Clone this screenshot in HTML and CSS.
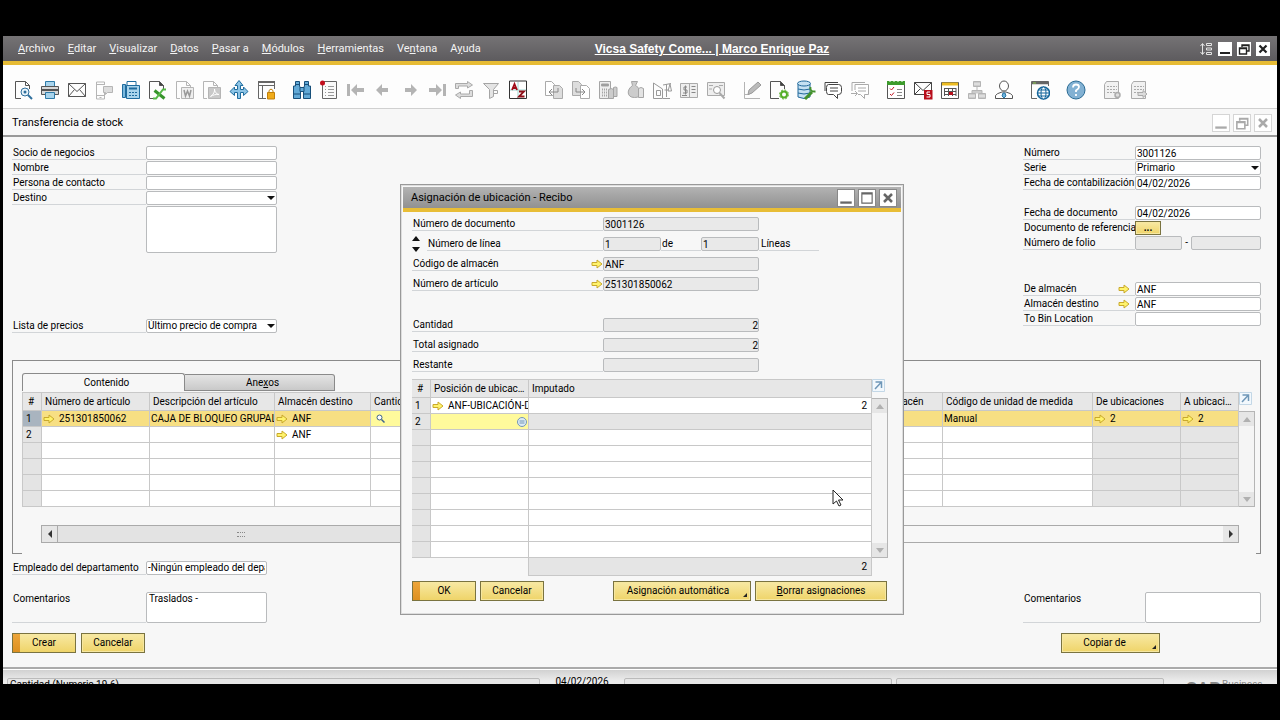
FILE: index.html
```html
<!DOCTYPE html>
<html lang="es">

<head>
    <meta charset="utf-8" />
    <title>Transferencia de stock</title>
    <link rel="stylesheet" href="styles.css">
</head>

<body>
    <svg class="sprite" aria-hidden="true">
        <symbol id="arrow" viewBox="0 0 12 10">
            <path d="M1 3.500h5V1l5 4-5 4V6.500H1z" fill="#fff36b" stroke="#c9a92c" stroke-linejoin="round" />
        </symbol>
        <symbol id="expand" viewBox="0 0 13 13">
            <path d="M.5.5h12v12H.5z" fill="#f2f8fd" stroke="#c3d7e6" />
            <path d="M3.500 3h6v6M9.500 3L3 10" fill="none" stroke="#6f97b8" stroke-width="1.500" />
        </symbol>
        <symbol id="min" viewBox="0 0 14 14">
            <path d="M2 11h10" stroke="currentColor" stroke-width="2" />
        </symbol>
        <symbol id="restore" viewBox="0 0 14 14">
            <path d="M5 5V3h7v6h-2M5 3.500h7M2.500 6h7v6h-7zM2.500 6.500h7" fill="none" stroke="currentColor" stroke-width="1.400" />
        </symbol>
        <symbol id="max" viewBox="0 0 14 14">
            <path d="M2.500 2.500h9v9h-9zM2.500 3.500h9" fill="none" stroke="currentColor" />
        </symbol>
        <symbol id="close" viewBox="0 0 14 14">
            <path d="M3.500 3.500l7 7M10.500 3.500l-7 7" stroke="currentColor" stroke-width="2.200" />
        </symbol>
    </svg>

    <div class="app">
        <header class="menubar">
            <nav class="menu">
                <a href="#"><u>A</u>rchivo</a>
                <a href="#"><u>E</u>ditar</a>
                <a href="#"><u>V</u>isualizar</a>
                <a href="#"><u>D</u>atos</a>
                <a href="#"><u>P</u>asar a</a>
                <a href="#"><u>M</u>ódulos</a>
                <a href="#"><u>H</u>erramientas</a>
                <a href="#">Ve<u>n</u>tana</a>
                <a href="#">A<u>y</u>uda</a>
            </nav>
            <a class="company" href="#">Vicsa Safety Come... | Marco Enrique Paz</a>
            <div class="win-buttons">
                <button class="plain" aria-label="Ajustar">
                    <svg width="14" height="14" viewBox="0 0 14 14" fill="none" stroke="#e4e4e4">
                        <path d="M3.500 2v10M1.500 4l2-2.500 2 2.500M1.500 10l2 2.500 2-2.500M7.500 1.500h5v2h-5zM7.500 6h5v2h-5zM7.500 10.500h5v2h-5z" />
                    </svg>
                </button>
                <button aria-label="Minimizar"><svg><use href="#min" /></svg></button>
                <button aria-label="Restaurar"><svg><use href="#restore" /></svg></button>
                <button aria-label="Cerrar"><svg><use href="#close" /></svg></button>
            </div>
        </header>

        <div class="toolbar">
            <div class="tool-group">
                <button aria-label="Vista previa"><svg viewBox="0 0 20 20" fill="none" stroke="#555">
                    <path d="M8 18.500H2.500v-17h10l4 4V9M12.500 1.500v4h4" />
                    <circle cx="12" cy="12" r="4" stroke="#2f6f9c" fill="#e8f3fa" /><circle cx="12" cy="12" r="1.500" fill="#2f6f9c" stroke="none" />
                    <path d="M15 15l4 4" stroke="#2f6f9c" stroke-width="2" /></svg></button>
                <button aria-label="Imprimir"><svg viewBox="0 0 20 20" stroke="#555">
                    <path d="M5.500 6.500v-5h9v5z" fill="#a9d4ec" stroke="#2f7ba8" />
                    <path d="M1.500 6.500h17v8h-17z" fill="#d8d8d8" /><path d="M2 10h16" stroke-width="2" />
                    <path d="M5.500 12.500h9v6h-9z" fill="#a9d4ec" stroke="#2f7ba8" /></svg></button>
                <button aria-label="Correo"><svg viewBox="0 0 20 20" fill="none" stroke="#555">
                    <path d="M1.500 3.500h17v13h-17zM1.500 3.500l8.500 8 8.500-8M1.500 16.500l6-7M18.500 16.500l-6-7" /></svg></button>
                <button aria-label="SMS"><svg viewBox="0 0 20 20" fill="none" stroke="#b5b5b5">
                    <path d="M10.500 12v7h-8v-17h8v3M2.500 4.500h8M2.500 15.500h8M5.500 17.500h2" />
                    <path d="M9.500 6.500h9v6h-5l-2 2v-2h-2z" fill="#ddd" /></svg></button>
                <button aria-label="Fax"><svg viewBox="0 0 20 20" stroke="#1f6c9e">
                    <path d="M6 6V1.500h9V6" fill="#fff" /><path d="M1.500 4.500h3v13h-3z" fill="#7ab8dd" />
                    <path d="M5.500 5.500h13v13h-13z" fill="#a9d4ec" /><path d="M8 8.500h8" stroke-width="2" />
                    <path d="M8 12.500h8M8 15.500h8" stroke-dasharray="2 1" /></svg></button>
                <button aria-label="Excel"><svg viewBox="0 0 20 20" fill="none" stroke="#555">
                    <path d="M5 18.500H1.500v-17h10l4 4V9" /><path d="M11.500 1.500v4h4z" fill="#444" />
                    <path d="M6.500 10.500l10 8" stroke="#36942b" stroke-width="3" /><path d="M18 9.500h-3l-7 9H5" stroke="#55b947" stroke-width="2" /></svg></button>
                <button aria-label="Word"><svg viewBox="0 0 20 20" fill="none" stroke="#b5b5b5">
                    <path d="M5 18.500H1.500v-17h10l4 4V7M11.500 1.500v4h4" /><path d="M6.500 7.500h12v11h-12z" fill="#eee" />
                    <path d="M9 10l1.500 6 2-5 2 5 1.500-6" stroke="#999" stroke-width="1.500" /></svg></button>
                <button aria-label="PDF"><svg viewBox="0 0 20 20" fill="none" stroke="#b5b5b5">
                    <path d="M5 18.500H1.500v-17h10l4 4V7M11.500 1.500v4h4" /><path d="M6.500 7.500h12v11h-12z" fill="#c9c9c9" />
                    <path d="M8.500 16.500c3-2 4.500-5 4-7.500 0 3 2 5 4.500 5.500-3-.5-6 .5-8.500 2z" stroke="#fff" /></svg></button>
                <button aria-label="Iniciar aplicación"><svg viewBox="0 0 20 20" fill="#8cc4e6" stroke="#1f6c9e">
                    <path d="M10 .500l4 5h-2.500v4h3V7l4.500 4.500-4.500 4v-3h-3v6h-3v-6h-3v3L1 11.500 5.500 7v2.500h3v-4H6z" /></svg></button>
                <button aria-label="Bloquear"><svg viewBox="0 0 20 20" fill="none" stroke="#666">
                    <path d="M10 18.500H2.500v-17h16V9M2.500 5.500h16M6.500 5.500v13" /><path d="M2 2h17" stroke-width="2" />
                    <path d="M11.500 12.500h7v6.500h-7z" fill="#f0ab19" stroke="#c17f09" /><path d="M13 12v-1.500q2-3 4 0V12" stroke="#c17f09" /></svg></button>
            </div>
            <div class="tool-group">
                <button aria-label="Buscar"><svg viewBox="0 0 20 20" fill="#62a9d6" stroke="#174f7a">
                    <path d="M3.500 1.500h4V6l1 2v10.500h-7V6h2zM12.500 1.500h4V6h2v12.500h-7V8l1-2z" /><path d="M8 7.500h4v4H8zM1.500 14h7M11.500 14h7M3.500 4.500h4M12.500 4.500h4" /></svg></button>
                <button aria-label="Crear"><svg viewBox="0 0 20 20" fill="none" stroke="#666">
                    <path d="M3.500 1.500h14v17h-14z" fill="#fafafa" /><path d="M6 6.500h1M9 6.500h6M6 9.500h1M9 9.500h6M6 12.500h1M9 12.500h6M6 15.500h1M9 15.500h6" stroke="#999" />
                    <circle cx="3.500" cy="3" r="2.500" fill="#c20d1c" stroke="none" /></svg></button>
                <button aria-label="Primer registro"><svg viewBox="0 0 20 20" fill="#b4b4b4">
                    <path d="M1 4h3v12H1zM5 10l6-6v4h7v4h-7v4z" /></svg></button>
                <button aria-label="Registro anterior"><svg viewBox="0 0 20 20" fill="#b4b4b4"><path d="M3 10l6-6v4h6v4H9v4z" /></svg></button>
                <button aria-label="Registro siguiente"><svg viewBox="0 0 20 20" fill="#b4b4b4"><path d="M17 10l-6-6v4H5v4h6v4z" /></svg></button>
                <button aria-label="Último registro"><svg viewBox="0 0 20 20" fill="#b4b4b4">
                    <path d="M19 4h-3v12h3zM15 10L9 4v4H2v4h7v4z" /></svg></button>
                <button aria-label="Actualizar"><svg viewBox="0 0 20 20" fill="#ddd" stroke="#aaa">
                    <path d="M1.500 8.500v-5h12v-2l5 3.500-5 3v-2h-9v2.500zM18.500 10.500v6h-12v2l-5-3.500 5-3v2h9v-3.500z" /></svg></button>
                <button aria-label="Filtrar"><svg viewBox="0 0 20 20" fill="#e4e4e4" stroke="#a5a5a5">
                    <path d="M2.500 3.500h15l-5 6v7l-4 2v-9z" /><path d="M12.500 10.500h4v3h-4" fill="none" /></svg></button>
                <button aria-label="Clasificar"><svg viewBox="0 0 20 20">
                    <path d="M1.500 1h17v17.500h-17z" fill="#fff" stroke="#333" /><path d="M10 2v16M2 10h16" stroke="#9fd6d0" />
                    <path d="M4 10l2.500-6L9 10M5 8h3" fill="none" stroke="#a00b17" stroke-width="1.800" /><path d="M11 11.500h5l-5 5h5.500" fill="none" stroke="#8e1019" stroke-width="1.800" /></svg></button>
            </div>
            <div class="tool-group">
                <button aria-label="Documento base"><svg viewBox="0 0 20 20" fill="#fff" stroke="#aaa">
                    <path d="M1.500 1.500h6l3 3v11h-9z" /><path d="M9.500 5.500h6l3 3v10h-9z" fill="#ddd" /><path d="M14 8v4H5M8 9l-3 3 3 3" fill="none" stroke="#888" /></svg></button>
                <button aria-label="Documento de destino"><svg viewBox="0 0 20 20" fill="#ddd" stroke="#aaa">
                    <path d="M1.500 1.500h6l3 3v11h-9z" /><path d="M9.500 5.500h6l3 3v10h-9z" fill="#fff" /><path d="M5 8v4h9M11 9l3 3-3 3" fill="none" stroke="#888" /></svg></button>
                <button aria-label="Ganancia bruta"><svg viewBox="0 0 20 20" fill="#eee" stroke="#a5a5a5">
                    <path d="M1.500 1.500h11v17h-11z" /><path d="M3.500 4h7v2h-7z" fill="#999" /><path d="M4 9.500h6M4 12.500h6M4 15.500h6" stroke-dasharray="1 1" stroke-width="2" />
                    <path d="M10.500 9.500q3-2 5 0v9h-5zM15.500 7.500q2-1 3.500 0v9h-3.500z" fill="#ccc" /></svg></button>
                <button aria-label="Medios de pago"><svg viewBox="0 0 20 20" fill="#ccc" stroke="#a5a5a5">
                    <path d="M6.500 1.500h6l-2 4c8 5 7 12-1 12s-8-8-2-12z" /><path d="M13.500 8.500q2.500-2 5 0v9h-5z" fill="#e3e3e3" /></svg></button>
                <button aria-label="Volumen y peso"><svg viewBox="0 0 20 20" fill="none" stroke="#999">
                    <path d="M1.500 3v15.500h9V9l-9-6M4.500 10.500h4v5h-4zM14.500 4v13M11 18.500h7M11 5l8-1.500M16 11l2-7 1.500 7zM12.500 10h4" /></svg></button>
                <button aria-label="Asiento"><svg viewBox="0 0 20 20" fill="#eee" stroke="#aaa">
                    <path d="M1.500 3.500h17v14h-17zM10.500 3.500v14" /><path d="M12.500 6.500h4M12.500 9.500h4M12.500 12.500h4M3 15.500h5M8 7H5v3h3v3H4M6.500 5.500v9" fill="none" stroke="#888" /></svg></button>
                <button aria-label="Detalles de asiento"><svg viewBox="0 0 20 20" fill="#eee" stroke="#aaa">
                    <path d="M1.500 2.500h17v13h-17z" /><path d="M3 5.500h4M13 5.500h4M3 9h3" /><circle cx="11" cy="10" r="3.500" fill="#fff" stroke="#999" /><path d="M13.500 13l5 5.500" stroke-width="2" /></svg></button>
            </div>
            <div class="tool-group">
                <button aria-label="Diseño"><svg viewBox="0 0 20 20" fill="none" stroke="#b4b4b4">
                    <path d="M2.500 2v16.500H18M2.500 14.500h5" /><path d="M6 14.500l1-4.500 9-8 3 3-9 8z" fill="#bbb" stroke="#999" /></svg></button>
                <button aria-label="Configuración"><svg viewBox="0 0 20 20" fill="none" stroke="#555">
                    <path d="M10 18.500H1.500v-17h10l4 4V9" /><path d="M11.500 1.500v4h4z" fill="#444" />
                    <circle cx="15" cy="14.500" r="3" stroke="#55ae28" stroke-width="2" /><circle cx="15" cy="14.500" r="4.500" stroke="#55ae28" stroke-dasharray="2 1.500" /></svg></button>
                <button aria-label="Consultas"><svg viewBox="0 0 20 20" fill="#c5e1f3" stroke="#21699b">
                    <path d="M2 4v13q6 3 12 0V4z" /><ellipse cx="8" cy="3.500" rx="6.500" ry="2.500" /><path d="M2 9q6 2 12 0M2 13q6 2 12 0" fill="none" />
                    <path d="M9 19l7-7" stroke="#43922c" stroke-width="3" /><path d="M14.500 7q-1 5 5 4.500" stroke="#43922c" stroke-width="2" fill="none" /></svg></button>
                <button aria-label="Mensajes"><svg viewBox="0 0 20 20" fill="#fff" stroke="#444">
                    <path d="M2 11V2.500h13" fill="none" /><path d="M5.500 4.500h10q3 0 3 3v4q0 3-3 3h-1v4l-4-4h-5q-2 0-2-3v-4q0-3 2-3z" /><path d="M7 8h8M7 11h8" /></svg></button>
                <button aria-label="Responder"><svg viewBox="0 0 20 20" fill="#fff" stroke="#aaa">
                    <path d="M2 11V2.500h13" fill="none" /><path d="M5 10V4.500h13.500v10h-4v4l-4-4H8" /><path d="M8 8h8M8 11h8M1 13.500h6M5 11l2.500 2.500L5 16" fill="none" /></svg></button>
            </div>
            <div class="tool-group">
                <button aria-label="Actividades"><svg viewBox="0 0 20 20" fill="#fff" stroke="#555">
                    <path d="M1.500 3.500h17v15h-17z" /><path d="M1 3h18" stroke="#3d9b2c" stroke-width="4" /><path d="M4 1v1M8 1v1M12 1v1M16 1v1" stroke="#fff" />
                    <path d="M4 8.500l1.500 1.500L8 7M4 14l1.500 1.500L8 12.500" fill="none" stroke="#c21825" /><path d="M11 9.500h5M11 12.500h5M11 15.500h5" stroke="#888" /></svg></button>
                <button aria-label="Alertas"><svg viewBox="0 0 20 20" fill="#fff" stroke="#444">
                    <path d="M1.500 2.500h17v12h-17zM1.500 2.500l8.500 8 8.500-8M1.500 14.500l6-6" /><path d="M11 10h8.500v9.500H11z" fill="#b80f1c" stroke="none" />
                    <path d="M17 12h-3v2.500h3V17h-3.500" fill="none" stroke="#fff" /></svg></button>
                <button aria-label="Calendario"><svg viewBox="0 0 20 20" fill="#fff" stroke="#555">
                    <path d="M1.500 2.500h17v16h-17z" /><path d="M2 4h16" stroke="#edbc21" stroke-width="3" /><path d="M4 8.500h12M4 11.500h12M4 14.500h12M4.500 8v8M8.500 8v8M12.500 8v8M16 8v8" /><path d="M9 12h4v3H9z" fill="#b80f1c" stroke="none" /></svg></button>
                <button aria-label="Organigrama"><svg viewBox="0 0 20 20" fill="#ccc" stroke="#b5b5b5">
                    <path d="M6.500 1.500h7v5h-7zM1.500 13.500h7v5h-7zM11.500 13.500h7v5h-7zM10 6.500v4M5 13.500v-3h10v3" /><path d="M2 16h6M12 16h6M7 4h6" stroke="#eee" /></svg></button>
                <button aria-label="Usuario"><svg viewBox="0 0 20 20" fill="#fff" stroke="#555">
                    <path d="M1.500 18.500v-3q1-2 6.500-3.500h4q5.500 1.500 6.500 3.500v3z" /><ellipse cx="10" cy="6" rx="4.500" ry="5" /><path d="M9 13h2l1 3-2 2-2-2z" fill="#6db3dc" stroke="#2b77a6" /></svg></button>
            </div>
            <div class="tool-group">
                <button aria-label="Web"><svg viewBox="0 0 20 20" fill="#fff" stroke="#666">
                    <path d="M7 18.500H1.500v-17h17V6" fill="none" /><path d="M1.500 3h17" stroke-width="2.500" /><path d="M3 3h3" stroke="#8dcc4f" />
                    <circle cx="13.500" cy="13" r="6" stroke="#13659b" stroke-width="1.500" /><ellipse cx="13.500" cy="13" rx="2.500" ry="6" stroke="#13659b" /><path d="M8 13h11M8.500 10h10M8.500 16h10" stroke="#13659b" /></svg></button>
            </div>
            <div class="tool-group">
                <button aria-label="Ayuda"><svg viewBox="0 0 20 20"><circle cx="10" cy="10" r="9" fill="#82b1d3" stroke="#2a6b94" />
                    <path d="M7 7.500q0-3 3-3t3 2.500q0 1.500-3 3.500v1.500M10 14v2" fill="none" stroke="#fff" stroke-width="1.800" /></svg></button>
            </div>
            <div class="tool-group">
                <button aria-label="Panel"><svg viewBox="0 0 20 20" fill="#f1f1f1" stroke="#aaa">
                    <path d="M4.500 1.500h12v17h-14v-14z" /><path d="M5 6.500h10M5 9.500h10M5 12.500h8" stroke-dasharray="2 1" /><circle cx="15.500" cy="15" r="2.500" stroke-width="1.500" fill="#ddd" /></svg></button>
                <button aria-label="Exportar panel"><svg viewBox="0 0 20 20" fill="#f1f1f1" stroke="#aaa">
                    <path d="M4.500 1.500h12v17h-14v-14z" /><path d="M5 6.500h10M5 9.500h10M5 12.500h5" stroke-dasharray="2 1" /><path d="M9 12.500h5v-2l4 3.500-4 3.500v-2H9z" fill="#ddd" /></svg></button>
            </div>
        </div>

        <div class="doc-title">
            <h1>Transferencia de stock</h1>
            <div class="win-buttons faded">
                <button aria-label="Minimizar"><svg><use href="#min" /></svg></button>
                <button aria-label="Restaurar"><svg><use href="#restore" /></svg></button>
                <button aria-label="Cerrar"><svg><use href="#close" /></svg></button>
            </div>
        </div>

        <main class="document">
            <div class="columns">
                <div class="left-form">
                    <div class="row"><label for="socio">Socio de negocios</label><input id="socio" type="text"></div>
                    <div class="row"><label for="nombre">Nombre</label><input id="nombre" type="text"></div>
                    <div class="row"><label for="persona">Persona de contacto</label><input id="persona" type="text"></div>
                    <div class="row"><label for="destino">Destino</label><span class="select"><select id="destino"><option></option></select></span></div>
                    <div class="row area"><span class="no-label"></span><textarea aria-label="Dirección"></textarea></div>
                    <div class="row prices"><label for="lista">Lista de precios</label><span class="select"><select id="lista"><option>Último precio de compra</option></select></span></div>
                </div>
                <div class="right-form">
                    <div class="row"><label for="numero">Número</label><input id="numero" type="text" value="3001126"></div>
                    <div class="row"><label for="serie">Serie</label><span class="select"><select id="serie"><option>Primario</option></select></span></div>
                    <div class="row"><label for="fcont">Fecha de contabilización</label><input id="fcont" type="text" value="04/02/2026"></div>
                    <div class="row spaced"><label for="fdoc">Fecha de documento</label><input id="fdoc" type="text" value="04/02/2026"></div>
                    <div class="row"><label class="no-line" for="docref">Documento de referencia</label><button class="gold dots" id="docref">...</button></div>
                    <div class="row"><label for="folio">Número de folio</label><span class="folio"><input id="folio" type="text" disabled>-<input aria-label="Folio" type="text" disabled></span></div>
                    <div class="row bins"><label for="dealm">De almacén<svg class="arrow"><use href="#arrow" /></svg></label><input id="dealm" type="text" value="ANF"></div>
                    <div class="row"><label for="almdest">Almacén destino<svg class="arrow"><use href="#arrow" /></svg></label><input id="almdest" type="text" value="ANF"></div>
                    <div class="row"><label for="tobin">To Bin Location</label><input id="tobin" type="text"></div>
                </div>
            </div>

            <section class="panel">
                <div class="tabs">
                    <button class="tab active">Contenido</button>
                    <button class="tab">Ane<u>x</u>os</button>
                </div>
                <div class="grid-wrap">
                    <table class="grid items">
                        <colgroup>
                            <col class="c-num"><col class="c-art"><col class="c-desc"><col class="c-dest"><col><col class="c-alm"><col class="c-um"><col class="c-de"><col class="c-a">
                        </colgroup>
                        <thead>
                            <tr>
                                <th>#</th>
                                <th>Número de artículo</th>
                                <th>Descripción del artículo</th>
                                <th>Almacén destino</th>
                                <th>Cantidad</th>
                                <th>Código de almacén</th>
                                <th>Código de unidad de medida</th>
                                <th>De ubicaciones</th>
                                <th>A ubicaciones</th>
                            </tr>
                        </thead>
                        <tbody>
                            <tr class="selected">
                                <td>1</td>
                                <td><svg class="arrow"><use href="#arrow" /></svg>251301850062</td>
                                <td>CAJA DE BLOQUEO GRUPAL</td>
                                <td><svg class="arrow"><use href="#arrow" /></svg>ANF</td>
                                <td class="editing"><svg class="lens" viewBox="0 0 9 9" fill="#fff" stroke="#3f648c"><circle cx="3.500" cy="3.500" r="2.500" /><path d="M5.500 5.500l3 3" stroke-width="1.500" /></svg></td>
                                <td></td>
                                <td>Manual</td>
                                <td><svg class="arrow"><use href="#arrow" /></svg>2</td>
                                <td><svg class="arrow"><use href="#arrow" /></svg>2</td>
                            </tr>
                            <tr>
                                <td>2</td><td></td><td></td>
                                <td><svg class="arrow"><use href="#arrow" /></svg>ANF</td>
                                <td></td><td></td><td></td><td></td><td></td>
                            </tr>
                            <tr><td></td><td></td><td></td><td></td><td></td><td></td><td></td><td></td><td></td></tr>
                            <tr><td></td><td></td><td></td><td></td><td></td><td></td><td></td><td></td><td></td></tr>
                            <tr><td></td><td></td><td></td><td></td><td></td><td></td><td></td><td></td><td></td></tr>
                            <tr><td></td><td></td><td></td><td></td><td></td><td></td><td></td><td></td><td></td></tr>
                        </tbody>
                    </table>
                    <div class="grid-side">
                        <svg class="expand"><use href="#expand" /></svg>
                        <div class="vscroll"><i class="up"></i><i class="down"></i></div>
                    </div>
                </div>
                <div class="hscroll">
                    <i class="left"></i>
                    <div class="thumb"><span></span></div>
                    <i class="right"></i>
                </div>
            </section>

            <div class="columns bottom">
                <div class="left-form narrow">
                    <div class="row"><label for="empleado">Empleado del departamento</label><select id="empleado"><option>-Ningún empleado del departamento</option></select></div>
                    <div class="row comment"><label for="coment">Comentarios</label><textarea id="coment">Traslados -</textarea></div>
                </div>
                <div class="right-form narrow">
                    <div class="row comment"><label for="coment2">Comentarios</label><textarea id="coment2"></textarea></div>
                </div>
            </div>
            <div class="actions">
                <button class="gold main">Crear</button>
                <button class="gold">Cancelar</button>
                <button class="gold menu-btn copy">Copiar de</button>
            </div>
        </main>

        <footer class="status">
            <div class="cell hint">Cantidad (Numeric 19.6)</div>
            <div class="date">04/02/2026</div>
            <div class="cell"></div>
            <div class="cell"></div>
            <div class="brand"><b>SAP</b><span>Business</span></div>
        </footer>

        <div class="dialog" role="dialog" aria-labelledby="dialog-title">
            <div class="dialog-title">
                <h2 id="dialog-title">Asignación de ubicación - Recibo</h2>
                <div class="win-buttons light">
                    <button aria-label="Minimizar"><svg><use href="#min" /></svg></button>
                    <button aria-label="Maximizar"><svg><use href="#max" /></svg></button>
                    <button aria-label="Cerrar"><svg><use href="#close" /></svg></button>
                </div>
            </div>
            <div class="dialog-body">
                <div class="drow"><label for="d-doc">Número de documento</label><input id="d-doc" type="text" value="3001126" readonly></div>
                <div class="drow">
                    <span class="spin"><i class="up"></i><i class="down"></i></span>
                    <label for="d-lin">Número de línea</label>
                    <input class="short" id="d-lin" type="text" value="1" readonly>
                    <label class="of" for="d-tot">de</label>
                    <input class="short" id="d-tot" type="text" value="1" readonly>
                    <span class="lines">Líneas</span>
                </div>
                <div class="drow"><label for="d-alm">Código de almacén<svg class="arrow"><use href="#arrow" /></svg></label><input id="d-alm" type="text" value="ANF" readonly></div>
                <div class="drow"><label for="d-art">Número de artículo<svg class="arrow"><use href="#arrow" /></svg></label><input id="d-art" type="text" value="251301850062" readonly></div>
                <div class="drow totals"><label for="d-can">Cantidad</label><input class="num" id="d-can" type="text" value="2" readonly></div>
                <div class="drow"><label for="d-tas">Total asignado</label><input class="num" id="d-tas" type="text" value="2" readonly></div>
                <div class="drow"><label for="d-res">Restante</label><input class="num" id="d-res" type="text" readonly></div>

                <div class="grid-wrap">
                    <table class="grid bins-grid">
                        <colgroup><col class="c-num"><col class="c-pos"><col></colgroup>
                        <thead>
                            <tr><th>#</th><th>Posición de ubicación</th><th>Imputado</th></tr>
                        </thead>
                        <tbody>
                            <tr><td>1</td><td><svg class="arrow"><use href="#arrow" /></svg>ANF-UBICACIÓN-DE</td><td class="num">2</td></tr>
                            <tr class="new">
                                <td>2</td>
                                <td class="editing"><svg class="pick" viewBox="0 0 10 10" fill="#dcebf5" stroke="#7396b5"><circle cx="5" cy="5" r="4.500" /><path d="M2.500 4h5M2.500 6h5" /></svg></td>
                                <td></td>
                            </tr>
                            <tr><td></td><td></td><td></td></tr>
                            <tr><td></td><td></td><td></td></tr>
                            <tr><td></td><td></td><td></td></tr>
                            <tr><td></td><td></td><td></td></tr>
                            <tr><td></td><td></td><td></td></tr>
                            <tr><td></td><td></td><td></td></tr>
                            <tr><td></td><td></td><td></td></tr>
                            <tr><td></td><td></td><td></td></tr>
                        </tbody>
                        <tfoot>
                            <tr><td colspan="2"></td><td class="num">2</td></tr>
                        </tfoot>
                    </table>
                    <div class="grid-side">
                        <svg class="expand"><use href="#expand" /></svg>
                        <div class="vscroll"><i class="up"></i><i class="down"></i></div>
                    </div>
                </div>
                <div class="actions">
                    <button class="gold main">OK</button>
                    <button class="gold">Cancelar</button>
                    <button class="gold menu-btn auto">Asignación automática</button>
                    <button class="gold wide"><u>B</u>orrar asignaciones</button>
                </div>
            </div>
        </div>

        <svg class="pointer" viewBox="0 0 12 18" fill="#fff" stroke="#222">
            <path d="M1 1v14l3.500-3 2.500 5 2-1-2.500-5H11z" />
        </svg>
    </div>
</body>

</html>
```

FILE: styles.css
```css
* {
    box-sizing: border-box;
}

body {
    margin: 0;
    padding: 36px 3px;
    height: 100vh;
    background: #000;
    color: #000;
    font: 10px/14px Roboto, sans-serif;
}

input,
select,
textarea,
button {
    font: inherit;
    color: inherit;
    margin: 0;
}

button {
    padding: 0;
}

.sprite {
    position: absolute;
    width: 0;
    height: 0;
}

.app {
    position: relative;
    height: 100%;
    overflow: hidden;
    background: #f7f7f7;
}

/* menu bar */
.menubar {
    display: flex;
    align-items: center;
    height: 29px;
    padding: 1px 7px 0 15px;
    background: linear-gradient(#757375, #5d5b5e);
    border-bottom: 4px solid #e6bb34;
}

.menu {
    display: flex;
    gap: 13px;
}

.menu a {
    color: #f4f4f4;
    font-size: 11px;
    text-decoration: none;
    white-space: nowrap;
}

.company {
    margin: 0 auto 0 114px;
    color: #fff;
    font: bold 12px/16px "Liberation Sans", Arial, sans-serif;
    white-space: nowrap;
}

.win-buttons {
    display: flex;
    gap: 5px;
}

.win-buttons button {
    width: 14px;
    height: 14px;
    border: 0;
    background: #fff;
    color: #222;
}

.win-buttons svg {
    display: block;
    width: 14px;
    height: 14px;
}

.win-buttons .plain {
    background: none;
}

/* toolbar */
.toolbar {
    display: flex;
    gap: 16px;
    height: 44px;
    padding: 15px 10px 0;
    background: #fdfdfd;
    border-bottom: 1px solid #d0d0d0;
}

.tool-group {
    display: flex;
    gap: 7px;
}

.tool-group button {
    width: 20px;
    height: 20px;
    border: 0;
    background: none;
}

.tool-group svg {
    display: block;
    width: 20px;
    height: 20px;
}

.doc-title {
    display: flex;
    align-items: center;
    justify-content: space-between;
    height: 28px;
    padding: 2px 5px 0 9px;
    border-bottom: 2px solid #999;
}

.doc-title h1,
.dialog-title h2 {
    margin: 0;
    font-size: 11px;
    line-height: 16px;
    font-weight: 400;
}

.faded,
.light {
    gap: 3px;
}

.faded button,
.light button {
    width: 18px;
    height: 18px;
    border: 1px solid #d5d5d5;
    color: #aaa;
}

.faded svg,
.light svg {
    width: 16px;
    height: 16px;
}

/* document form */
.document {
    padding: 9px 16px 14px 9px;
}

.columns {
    display: flex;
    justify-content: space-between;
}

.left-form {
    width: 265px;
}

.right-form {
    width: 238px;
}

.row {
    display: flex;
    height: 15px;
}

.row label,
.no-label {
    flex: none;
    display: flex;
    align-items: center;
    justify-content: space-between;
    width: 134px;
    height: 14px;
    padding-left: 1px;
    overflow: hidden;
    white-space: nowrap;
    border-bottom: 1px solid #d2d5d8;
}

.row .no-line,
.no-label {
    border-color: transparent;
}

.right-form label {
    width: 112px;
}

input,
select,
textarea {
    flex: 1;
    min-width: 0;
    width: 100%;
    height: 14px;
    padding: 0 1px;
    border: 1px solid #b9bbbd;
    border-radius: 2px;
    background: #fff;
    line-height: 12px;
    outline: 0;
}

textarea {
    resize: none;
    padding: 0 2px;
}

select {
    appearance: none;
}

input:disabled,
input:read-only {
    background: #e9e9e9;
}

.select {
    position: relative;
    display: flex;
    flex: 1;
    min-width: 0;
}

.select::after {
    content: "";
    position: absolute;
    right: 2px;
    top: 5px;
    border: 4px solid transparent;
    border-top-color: #111;
    border-bottom: 0;
    pointer-events: none;
}

.area {
    height: 113px;
}

.area textarea {
    height: 47px;
}

.spaced {
    margin-top: 15px;
}

.bins {
    margin-top: 31px;
}

.dots {
    width: 26px;
    height: 14px;
    line-height: 8px;
    font-weight: 700;
}

.folio {
    display: flex;
    flex: 1;
    gap: 3px;
}

.folio input + input {
    flex: none;
    width: 70px;
}

.arrow {
    flex: none;
    width: 12px;
    height: 10px;
    vertical-align: -2px;
}

.row .arrow {
    margin-right: 5px;
}

/* buttons */
.gold {
    position: relative;
    border: 1px solid #7a7340;
    background: linear-gradient(#f8e9a4, #efd469);
    box-shadow: inset 0 0 0 1px #f6e7a0;
    white-space: nowrap;
}

.actions {
    display: flex;
    gap: 5px;
}

.actions .gold {
    width: 64px;
    height: 20px;
}

.actions .main {
    background:
        linear-gradient(#eda53a, #dd9020) 0 0 / 7px 100% no-repeat,
        linear-gradient(#f8e9a4, #efd469);
    box-shadow: none;
}

.menu-btn::after {
    content: "";
    position: absolute;
    right: 3px;
    bottom: 3px;
    border: 2px solid #222;
    border-top-color: transparent;
    border-left-color: transparent;
}

.actions .copy {
    width: 99px;
    margin: 0 101px 0 auto;
    padding-right: 12px;
}

/* tab panel */
.panel {
    margin-top: 26px;
    height: 194px;
    padding: 12px 5px 0 9px;
    border: 1px solid #8a8a8a;
    border-bottom: 0;
    background:
        linear-gradient(#8a8a8a, #8a8a8a) 0 100% / 9px 1px no-repeat,
        linear-gradient(#8a8a8a, #8a8a8a) 100% 100% / 4px 1px no-repeat;
}

.tabs {
    display: flex;
    align-items: flex-end;
    height: 18px;
    margin-bottom: 1px;
}

.tab {
    width: 150px;
    height: 17px;
    padding-left: 6px;
    border: 1px solid #8a8a8a;
    border-left: 0;
    border-radius: 0 3px 0 0;
    background: linear-gradient(#e4e4e4, #c9c9c9);
}

.tab.active {
    width: 163px;
    height: 18px;
    border-left: 1px solid #8a8a8a;
    border-bottom: 0;
    border-radius: 3px 3px 0 0;
    background: #f7f7f7;
}

.grid-wrap {
    display: flex;
}

.grid {
    flex: 1;
    width: 100%;
    min-width: 0;
    table-layout: fixed;
    border-spacing: 0;
    border-left: 1px solid #c8c8c8;
}

.grid th,
.grid td {
    height: 16px;
    padding: 0 1px;
    overflow: hidden;
    white-space: nowrap;
    line-height: 14px;
    text-align: left;
    border-right: 1px solid #c8c8c8;
    border-bottom: 1px solid #c8c8c8;
    background: #fff;
}

.grid th {
    height: 19px;
    padding: 0 3px;
    border-top: 1px solid #c8c8c8;
    background: #e7e7e7;
    font-weight: 400;
    text-overflow: ellipsis;
}

.grid th:first-child {
    padding: 0 5px;
}

.grid tbody td:first-child {
    padding: 0 3px;
    background: #e4e4e4;
}

.grid .num {
    text-align: right;
    padding-right: 4px;
}

.c-num {
    width: 19px;
}

.c-art {
    width: 108px;
}

.c-desc {
    width: 125px;
}

.c-dest {
    width: 96px;
}

.c-alm {
    width: 108px;
}

.c-um {
    width: 150px;
}

.c-de {
    width: 88px;
}

.c-a {
    width: 58px;
}

.c-pos {
    width: 98px;
}

td .arrow {
    margin-right: 4px;
}

.items tbody td:nth-child(n+8),
.grid .new td {
    background: #e5e5e5;
}

.items .selected td,
.items .selected td:nth-child(n+8) {
    background: #f7df83;
}

.items .selected td:first-child {
    background: #a9b4bf;
}

.items .selected .editing,
.grid .new .editing {
    background: #fffa9c;
}

.lens {
    display: block;
    width: 9px;
    height: 9px;
    margin-left: 4px;
}

.pick {
    display: block;
    width: 10px;
    height: 10px;
    margin-left: auto;
}

.grid-side {
    display: flex;
    flex-direction: column;
    width: 16px;
}

.expand {
    width: 13px;
    height: 13px;
    margin-bottom: 6px;
}

.vscroll {
    display: flex;
    flex: 1;
    flex-direction: column;
    justify-content: space-between;
    border: 1px solid #b5b5b5;
    border-left: 0;
    background: #f5f5f5;
}

.vscroll i {
    display: flex;
    align-items: center;
    justify-content: center;
    height: 14px;
    background: #e6e6e6;
}

.up::after,
.down::after,
.left::after,
.right::after {
    content: "";
    border: 4px solid transparent;
}

.up::after {
    border-top: 0;
    border-bottom: 5px solid #b0b0b0;
}

.down::after {
    border-bottom: 0;
    border-top: 5px solid #b0b0b0;
}

.left::after {
    border-left: 0;
    border-right-color: #333;
}

.right::after {
    border-right: 0;
    border-left-color: #333;
}

.hscroll {
    display: flex;
    height: 18px;
    margin: 18px 16px 0 19px;
    border: 1px solid #aaa;
    background: #f7f7f7;
}

.hscroll i {
    display: flex;
    align-items: center;
    justify-content: center;
    width: 15px;
    background: #e6e6e6;
}

.thumb {
    display: flex;
    align-items: center;
    justify-content: center;
    width: 368px;
    margin-right: auto;
    border-left: 1px solid #aaa;
    border-right: 1px solid #aaa;
    background: #e3e3e3;
}

.thumb span {
    width: 8px;
    height: 5px;
    border-top: 1px dotted #888;
    border-bottom: 1px dotted #888;
}

/* bottom of the document */
.bottom {
    margin: 7px 0 10px;
}

.narrow {
    align-self: flex-end;
}

.left-form.narrow {
    width: 255px;
}

.narrow .comment {
    height: 31px;
}

.left-form .comment {
    margin-top: 16px;
}

.comment label {
    align-items: flex-start;
    height: 31px;
}

.comment textarea {
    height: 31px;
}

.right-form.narrow label {
    width: 122px;
}

/* status bar */
.status {
    display: flex;
    height: 34px;
    padding: 9px 14px 0 4px;
    border-top: 2px solid #aaa;
    box-shadow: inset 0 1px 0 #fff;
    background: linear-gradient(#cfcfcf, #ececec 12px);
}

.cell {
    flex: 1;
    margin-right: 4px;
    padding-left: 2px;
    border: 1px solid #bbb;
    border-radius: 2px;
    background: #e6e6e6;
    line-height: 12px;
}

.hint {
    flex: 2;
}

.date {
    width: 80px;
    padding-left: 12px;
    line-height: 8px;
}

.brand {
    display: flex;
    width: 95px;
    padding-left: 18px;
    color: #888;
    line-height: 14px;
}

.brand b {
    width: 36px;
    font-size: 18px;
    line-height: 22px;
}

/* bin allocation window */
.dialog {
    position: absolute;
    top: 148px;
    left: calc(50% - 240px);
    width: 504px;
    padding: 2px;
    border: 1px solid #999;
    outline: 1px solid #ddd;
    outline-offset: -2px;
    background: #f7f7f7;
}

.dialog-title {
    display: flex;
    align-items: center;
    justify-content: space-between;
    height: 25px;
    padding: 0 4px 0 8px;
    background: linear-gradient(#b3b3b3, #919191);
    border-bottom: 4px solid #e8bd36;
}

.light button {
    border-color: #888;
    color: #666;
}

.dialog-body {
    padding: 2px 14px 11px 9px;
}

.drow {
    display: flex;
    align-items: center;
    height: 20px;
}

.drow label {
    display: flex;
    align-items: center;
    justify-content: space-between;
    width: 191px;
    height: 14px;
    padding-left: 1px;
    border-bottom: 1px solid #d2d5d8;
}

.drow input {
    flex: none;
    width: 156px;
}

.drow .short {
    width: 58px;
}

.drow .of {
    width: 40px;
}

.drow .num {
    text-align: right;
    padding-right: 0;
}

.spin {
    display: flex;
    flex-direction: column;
    gap: 6px;
    width: 15px;
}

.spin i {
    height: 5px;
    width: 8px;
}

.spin i::after {
    display: block;
    width: 0;
}

.spin .up::after {
    border-bottom-color: #111;
}

.spin .down::after {
    border-top-color: #111;
}

.spin + label {
    width: 176px;
}

.lines {
    width: 60px;
    height: 14px;
    padding-left: 2px;
    border-bottom: 1px solid #d2d5d8;
}

.totals {
    margin-top: 21px;
}

.dialog .grid-wrap {
    margin: 4px -1px 5px 0;
}

.bins-grid tfoot td {
    height: 18px;
    background: #e5e5e5;
}

.bins-grid tfoot td:first-child {
    border-bottom: 0;
    background: #f7f7f7;
}

.bins-grid {
    border-left: 0;
}

.dialog .vscroll {
    flex: none;
    height: 160px;
}

.dialog .actions {
    gap: 4px;
}

.dialog .actions .auto {
    width: 138px;
    margin-left: auto;
    padding-right: 8px;
}

.dialog .actions .wide {
    width: 132px;
}

.pointer {
    position: absolute;
    top: 453px;
    left: calc(50% + 192px);
    width: 12px;
    height: 18px;
}
```
